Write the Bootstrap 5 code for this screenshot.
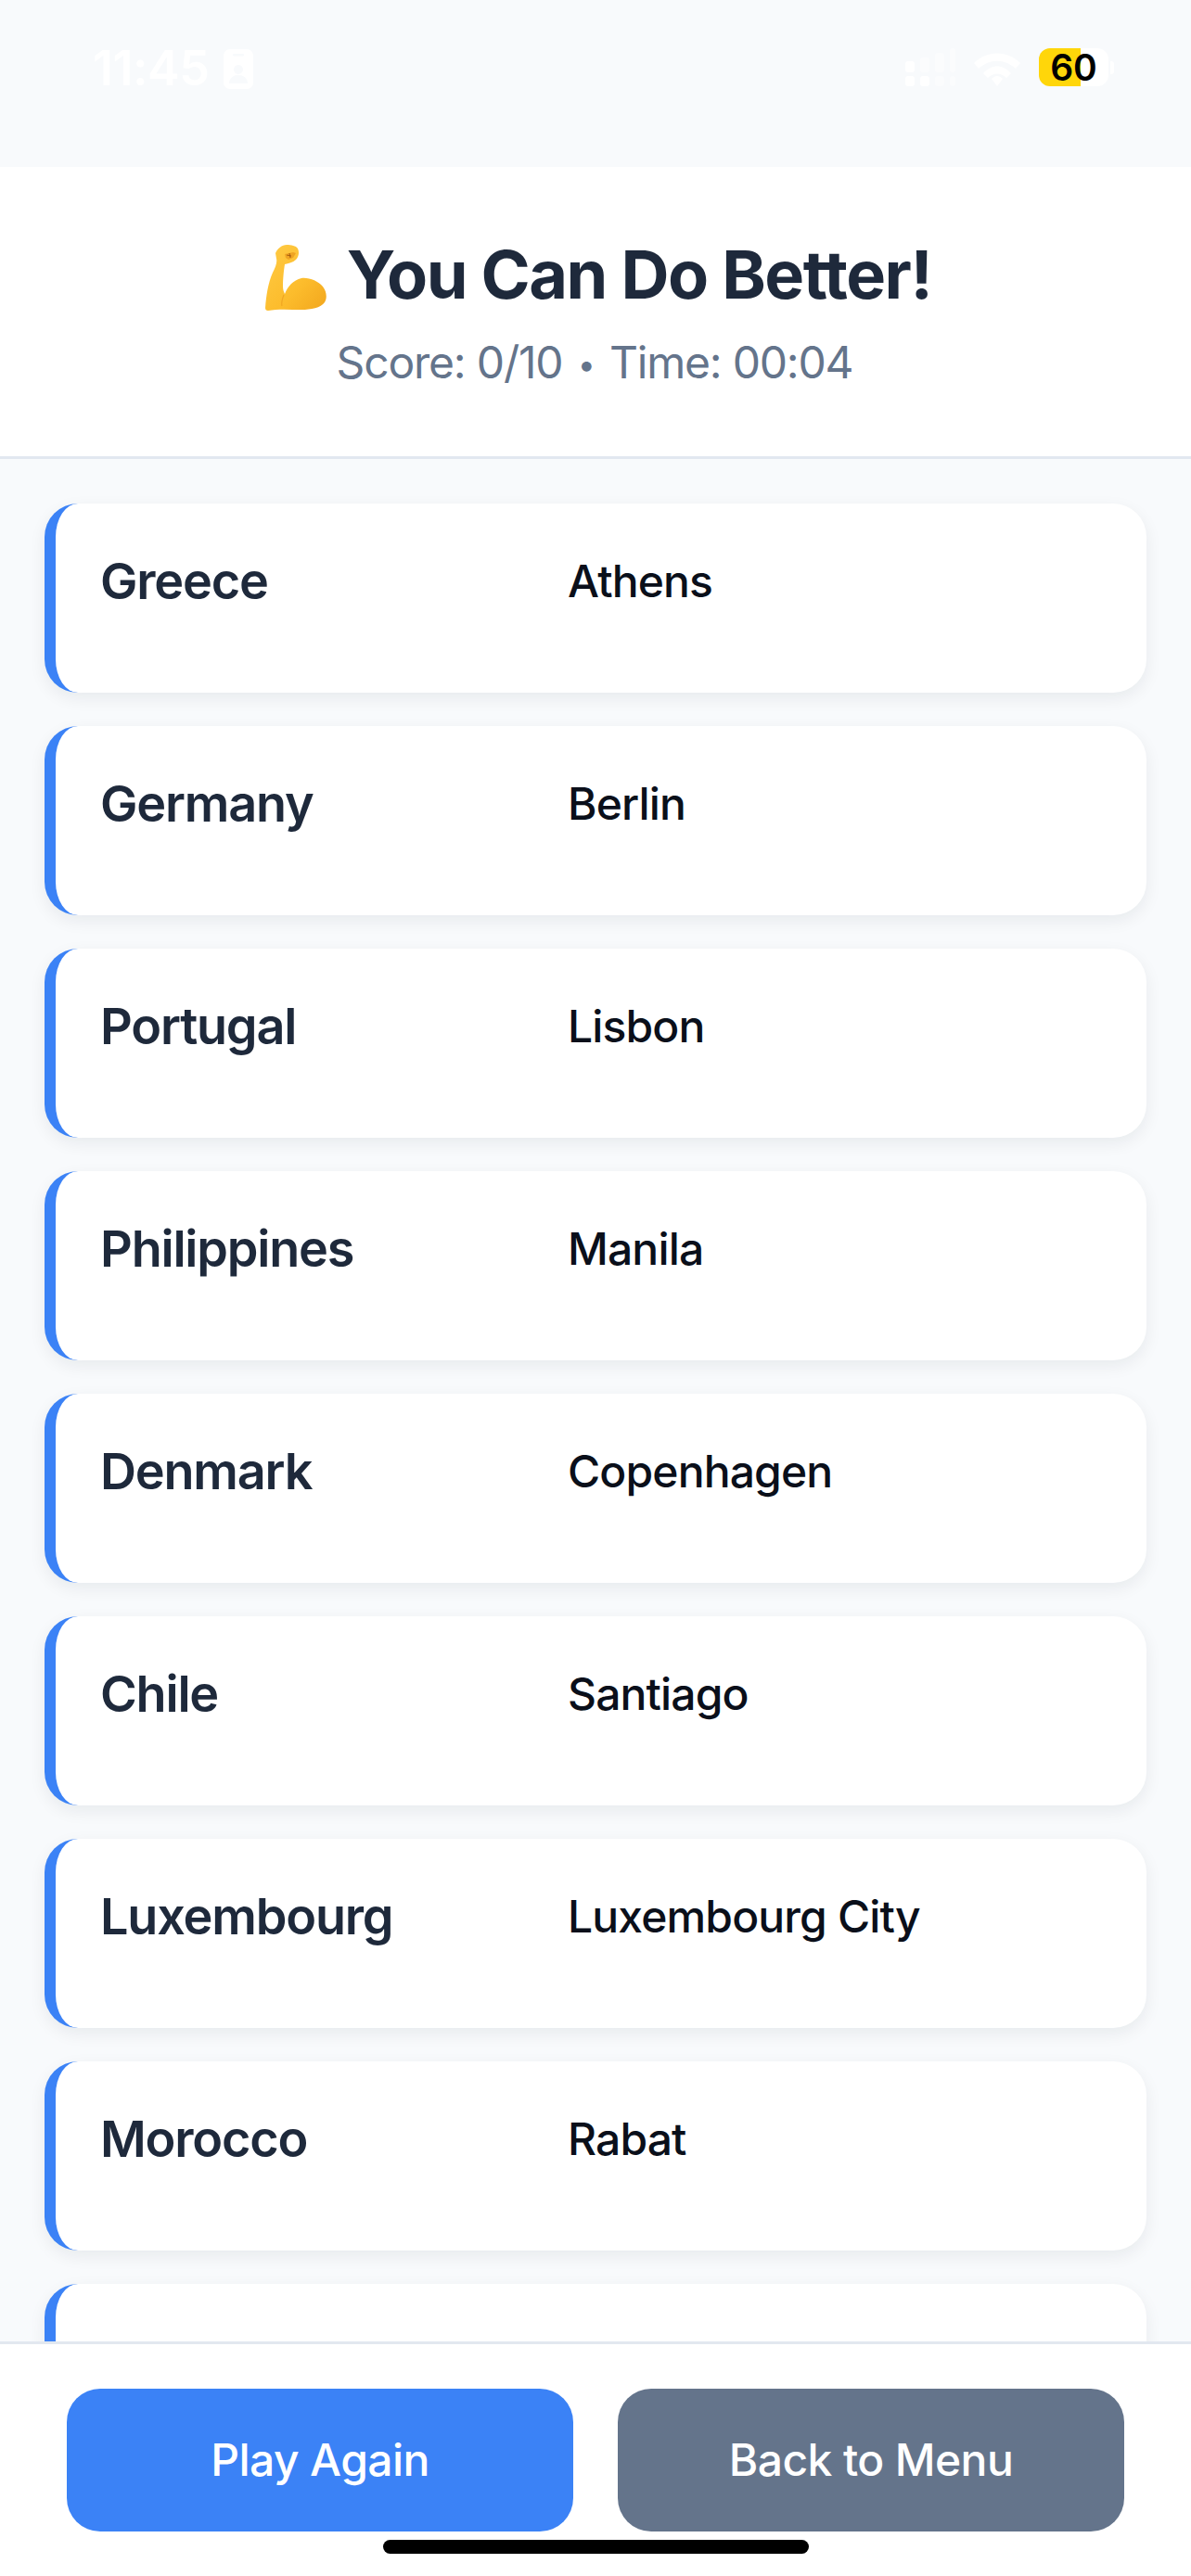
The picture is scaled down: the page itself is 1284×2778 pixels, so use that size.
<!DOCTYPE html>
<html lang="en">
<head>
<meta charset="utf-8">
<title>Quiz results</title>
<link href="https://cdn.jsdelivr.net/npm/bootstrap@5.3.0/dist/css/bootstrap.min.css" rel="stylesheet">
<style>
html,body{height:2778px;overflow:hidden}
body{font-family:Inter,"Liberation Sans",sans-serif;background:#f8fafc;color:#1e293b}
.screen{height:2778px;position:relative}
.status-strip{height:180px;flex:none;background:#f8fafc;padding:52px 83px 0 100px;color:#fff}
.clock{font-size:52px;font-weight:600;line-height:44px;letter-spacing:-.5px}
.batt{width:75px;height:41px;border-radius:12px;background:linear-gradient(90deg,#ffd60a 60%,#fff 60%);color:#000;font-size:39px;font-weight:600;line-height:41px;text-align:center}
.batt-nub{width:4px;height:14px;margin-left:2px;border-radius:0 3px 3px 0;background:#fff}
.head-panel{height:315px;flex:none;background:#fff;border-bottom:3px solid #e2e8f0;text-align:center;padding-top:72px}
.head-title{font-size:72px;font-weight:700;line-height:88px;margin:0;color:#1e293b;letter-spacing:-1.5px;padding-left:6px}
.head-title svg{vertical-align:-13px;margin-right:22px}
.head-sub{font-size:48px;line-height:58px;color:#64748b;margin-top:22px;letter-spacing:-1.2px;margin-right:2px}
.sep-dot{font-size:34px;margin:0 4px;vertical-align:3px}
.list-area{flex:1 1 auto;min-height:0;overflow:hidden;padding:48px 48px 0;display:flex;flex-direction:column;gap:36px}
.answer-row{flex:none;height:204px;background:#fff;border-left:12px solid #3b82f6;border-radius:36px;padding:48px;box-shadow:0 6px 18px rgba(15,23,42,.07)}
.country{width:504px;flex:none;font-size:54px;font-weight:600;line-height:72px;color:#1e293b;letter-spacing:-1.2px}
.capital{font-size:48px;font-weight:500;line-height:72px;color:#0a0f1a;letter-spacing:-.85px}
.foot-panel{height:253px;flex:none;background:#fff;border-top:3px solid #e2e8f0;padding:48px 72px 0;gap:48px}
.foot-btn{flex:1 1 0;height:154px;border:0;border-radius:36px;color:#fff;font-size:48px;font-weight:500;line-height:58px;letter-spacing:-.6px}
.foot-btn:hover,.foot-btn:active{color:#fff}
.btn-blue,.btn-blue:hover{background:#3b82f6}
.btn-slate,.btn-slate:hover{background:#64748b}
.home-bar{position:absolute;left:413px;top:2739px;width:459px;height:15px;border-radius:8px;background:#000}
</style>
</head>
<body>
<div class="screen d-flex flex-column">
  <div class="status-strip d-flex justify-content-between align-items-start">
    <div class="d-flex align-items-center gap-3">
      <span class="clock">11:45</span>
      <svg width="32" height="43" viewBox="0 0 32 43" aria-hidden="true"><rect width="32" height="43" rx="7" fill="#fff"/><rect x="10" y="5" width="12" height="2.5" rx="1" fill="#f8fafc"/><circle cx="16" cy="22" r="5" fill="#f8fafc"/><path d="M6 37c0-12 20-12 20 0z" fill="#f8fafc"/></svg>
    </div>
    <div class="d-flex align-items-center">
      <svg width="58" height="41" viewBox="0 0 58 41" aria-hidden="true" fill="#fff"><rect x="0" y="14" width="10" height="12" rx="3"/><rect x="16" y="10" width="10" height="16" rx="3" opacity=".4"/><rect x="32" y="5" width="10" height="21" rx="3" opacity=".4"/><rect x="48" y="0" width="6" height="26" rx="3" opacity=".4"/><rect x="0" y="30" width="10" height="11" rx="3"/><rect x="16" y="30" width="10" height="11" rx="3"/><rect x="32" y="30" width="10" height="11" rx="3" opacity=".4"/><rect x="48" y="30" width="6" height="11" rx="3" opacity=".4"/></svg>
      <svg class="ms-3" width="50" height="40" viewBox="0 0 50 40" aria-hidden="true" fill="#fff" style="margin-right:20px"><path d="M0 15C14 1 36 1 50 15l-5 6C33 10 17 10 5 21z"/><path d="M10 26C19 16 31 16 40 26l-5 5C29 25 21 25 15 31z"/><path d="M19 32c4-4 8-4 12 0l-6 8z"/></svg>
      <div class="batt">60</div>
      <div class="batt-nub"></div>
    </div>
  </div>

  <div class="head-panel">
    <h1 class="head-title"><svg width="66" height="72" viewBox="7 4 66 72" aria-hidden="true"><defs><linearGradient id="armfill" x1="0" y1="0" x2="1" y2="1"><stop offset="0" stop-color="#ffcb45"/><stop offset=".6" stop-color="#fcbc2c"/><stop offset="1" stop-color="#f2a61d"/></linearGradient></defs><path d="M18 14C20 9 25 5 30 5C35 5 40 6 42 9C44 13 43 18 40 21C37 24 32 25 28 26C27 32 26 42 26 50C26 53 27 56 28 58C31 50 37 43 46 41C54 40 64 44 69 50C73 55 74 62 71 67C67 73 56 75 46 75C34 75 20 74 10 76C8 76 7 75 7 73C8 60 10 46 15 35C18 29 20 24 19 20Z" fill="url(#armfill)"/><path d="M28 15l9-2 3 1-3 5-5 2-3-2z" fill="#e8961a" opacity=".7"/><path d="M30 16l5 1M33 14l1 5" stroke="#a65d10" stroke-width="1" fill="none"/><path d="M27 59c-2 5-3 8-2 12" stroke="#e8961a" stroke-width="1.2" fill="none" opacity=".6"/></svg>You Can Do Better!</h1>
    <div class="head-sub">Score: 0/10 <span class="sep-dot">•</span> Time: 00:04</div>
  </div>

  <div class="list-area">
    <div class="answer-row d-flex"><div class="country">Greece</div><div class="capital">Athens</div></div>
    <div class="answer-row d-flex"><div class="country">Germany</div><div class="capital">Berlin</div></div>
    <div class="answer-row d-flex"><div class="country">Portugal</div><div class="capital">Lisbon</div></div>
    <div class="answer-row d-flex"><div class="country">Philippines</div><div class="capital">Manila</div></div>
    <div class="answer-row d-flex"><div class="country">Denmark</div><div class="capital">Copenhagen</div></div>
    <div class="answer-row d-flex"><div class="country">Chile</div><div class="capital">Santiago</div></div>
    <div class="answer-row d-flex"><div class="country">Luxembourg</div><div class="capital">Luxembourg City</div></div>
    <div class="answer-row d-flex"><div class="country">Morocco</div><div class="capital">Rabat</div></div>
    <div class="answer-row d-flex"></div>
  </div>

  <div class="foot-panel d-flex">
    <button type="button" class="btn foot-btn btn-blue">Play Again</button>
    <button type="button" class="btn foot-btn btn-slate">Back to Menu</button>
  </div>
  <div class="home-bar"></div>
</div>
<script src="https://cdn.jsdelivr.net/npm/bootstrap@5.3.0/dist/js/bootstrap.bundle.min.js"></script>
</body>
</html>
